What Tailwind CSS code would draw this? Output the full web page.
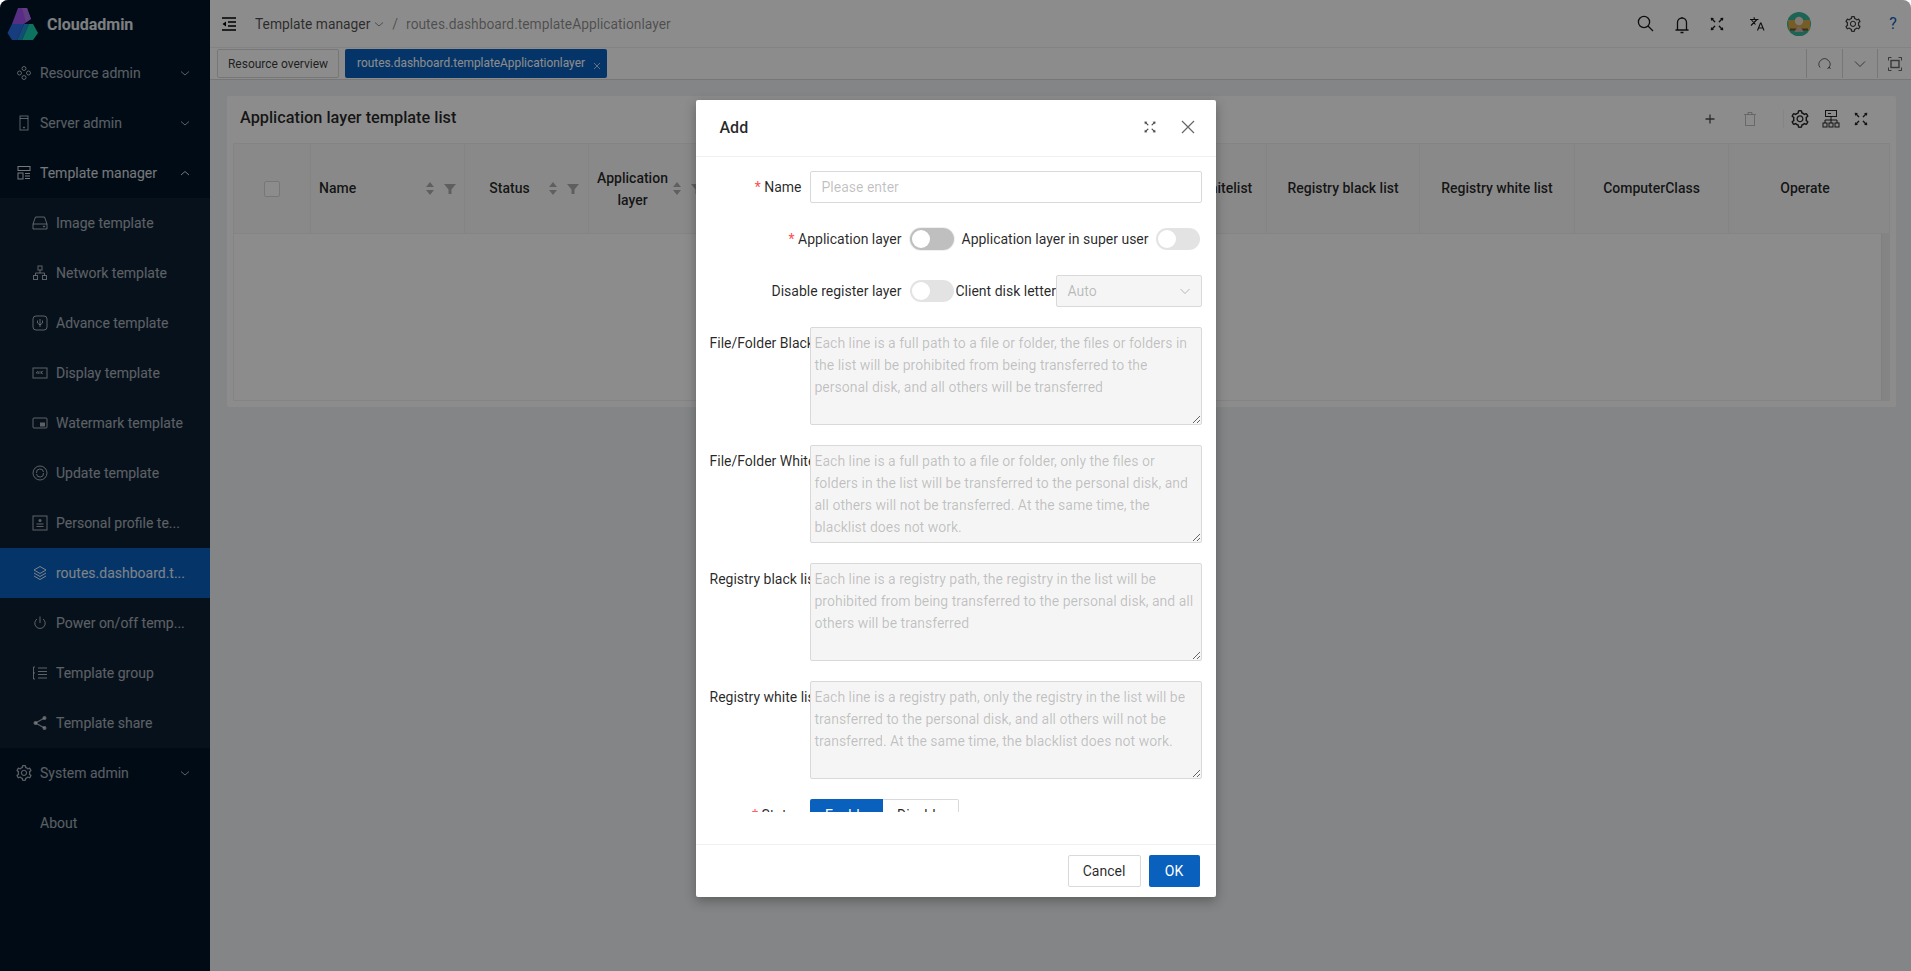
<!DOCTYPE html>
<html lang="en">
<head>
  <meta charset="UTF-8" />
  <title>Cloudadmin</title>
  <script src="https://cdn.jsdelivr.net/npm/@tailwindcss/browser@4"></script>
</head>
<body class="bg-white font-['Roboto',sans-serif] text-[14px] text-[#262626] overflow-hidden">
<div class="relative w-[1911px] h-[971px] flex overflow-hidden rounded-t-lg bg-[#f0f2f5]">

  <!-- Sidebar -->
  <aside class="w-[210px] shrink-0 bg-[#001529] text-white/65 flex flex-col">
    <div class="h-12 flex items-center gap-[7px]">
      <svg class="shrink-0" width="40" height="48" viewBox="0 0 40 48">
        <path d="M18 8 L27 8 L31 19 L24 24 L12 24 Z" fill="#9f55f0"/>
        <path d="M22 8 L27 8 L31 19 L26 22 Z" fill="#b170ee"/>
        <path d="M12 24 L24 24 L17 40 L12 40 L7.5 33 Z" fill="#2d6fe8"/>
        <path d="M24 24 L29 24 L22 40 L17 40 Z" fill="#228cd8"/>
        <path d="M29 24 L33 24 L38 33 L33 40 L22 40 Z" fill="#1bd0b0"/>
      </svg>
      <span class="text-[16px] font-bold text-white/90 mt-0.5">Cloudadmin</span>
    </div>
    <nav>
      <a class="h-[50px] flex items-center pl-[16px] pr-[20px]">
        <svg class="w-4 h-4 mr-2" viewBox="0 0 16 16" fill="none" stroke="currentColor"><circle cx="8" cy="3.5" r="2"/><circle cx="3.5" cy="8" r="2"/><circle cx="12.5" cy="8" r="2"/><circle cx="8" cy="12.5" r="2"/></svg>
        <span class="flex-1">Resource admin</span>
        <svg class="w-[10px] h-[10px]" viewBox="0 0 10 10" fill="none" stroke="currentColor"><path d="M1 3.5 L5 7 L9 3.5"/></svg>
      </a>
      <a class="h-[50px] flex items-center pl-[16px] pr-[20px]">
        <svg class="w-4 h-4 mr-2" viewBox="0 0 16 16" fill="none" stroke="currentColor"><rect x="4" y="1" width="8" height="14"/><path d="M4 3.5 H12"/><circle cx="8" cy="12.5" r=".6"/></svg>
        <span class="flex-1">Server admin</span>
        <svg class="w-[10px] h-[10px]" viewBox="0 0 10 10" fill="none" stroke="currentColor"><path d="M1 3.5 L5 7 L9 3.5"/></svg>
      </a>
      <a class="h-[50px] flex items-center pl-[16px] pr-[20px] text-white/85">
        <svg class="w-4 h-4 mr-2" viewBox="0 0 16 16" fill="none" stroke="currentColor"><rect x="2" y="1.5" width="12" height="4"/><rect x="2" y="8" width="5" height="6"/><path d="M9 8.5 H14 M9 11 H14 M9 13.5 H14"/></svg>
        <span class="flex-1">Template manager</span>
        <svg class="w-[10px] h-[10px]" viewBox="0 0 10 10" fill="none" stroke="currentColor"><path d="M1 7 L5 3.5 L9 7"/></svg>
      </a>
    </nav>
    <ul class="bg-[#0c1f33]">
      <li class="h-[50px] flex items-center pl-[32px]">
        <svg class="w-4 h-4 mr-2 shrink-0" viewBox="0 0 16 16" fill="none" stroke="currentColor"><path d="M1 14 V9 L3.5 2 H12.5 L15 9 V14 Z M1 9 H15"/><circle cx="12" cy="11.5" r=".6"/></svg>
        <span class="whitespace-nowrap">Image template</span>
      </li>
      <li class="h-[50px] flex items-center pl-[32px]">
        <svg class="w-4 h-4 mr-2 shrink-0" viewBox="0 0 16 16" fill="none" stroke="currentColor"><rect x="6" y="1" width="4" height="4"/><rect x="1.5" y="10.5" width="4" height="4"/><rect x="10.5" y="10.5" width="4" height="4"/><path d="M8 5 V8 M3.5 10.5 V8 H12.5 V10.5"/></svg>
        <span class="whitespace-nowrap">Network template</span>
      </li>
      <li class="h-[50px] flex items-center pl-[32px]">
        <svg class="w-4 h-4 mr-2 shrink-0" viewBox="0 0 16 16" fill="none" stroke="currentColor"><rect x="1" y="1" width="14" height="14" rx="3"/><path d="M8 4 V12 M5.5 5.5 V8 L8 10 M10.5 5.5 V8 L8 10"/></svg>
        <span class="whitespace-nowrap">Advance template</span>
      </li>
      <li class="h-[50px] flex items-center pl-[32px]">
        <svg class="w-4 h-4 mr-2 shrink-0" viewBox="0 0 16 16" fill="none" stroke="currentColor"><rect x="1" y="3" width="14" height="10"/><path d="M6 6 L4 8 H7 M7 6 V9 M9 6 V9 M11 6 L9 7.5 L11 9" stroke-width=".8"/></svg>
        <span class="whitespace-nowrap">Display template</span>
      </li>
      <li class="h-[50px] flex items-center pl-[32px]">
        <svg class="w-4 h-4 mr-2 shrink-0" viewBox="0 0 16 16" fill="none" stroke="currentColor"><rect x="1" y="3" width="14" height="10" rx="1"/><rect x="8" y="7.5" width="5" height="4" fill="currentColor" stroke="none"/></svg>
        <span class="whitespace-nowrap">Watermark template</span>
      </li>
      <li class="h-[50px] flex items-center pl-[32px]">
        <svg class="w-4 h-4 mr-2 shrink-0" viewBox="0 0 16 16" fill="none" stroke="currentColor"><circle cx="8" cy="8" r="7"/><path d="M4.5 8 A3.5 3.5 0 0 1 11.5 7 M11.5 8 A3.5 3.5 0 0 1 4.5 9"/></svg>
        <span class="whitespace-nowrap">Update template</span>
      </li>
      <li class="h-[50px] flex items-center pl-[32px]">
        <svg class="w-4 h-4 mr-2 shrink-0" viewBox="0 0 16 16" fill="none" stroke="currentColor"><rect x="1" y="1" width="14" height="14"/><circle cx="8" cy="5.5" r="1.5" fill="currentColor" stroke="none"/><path d="M4.5 9 H11.5 M4.5 11.5 H11.5"/></svg>
        <span class="whitespace-nowrap">Personal profile te...</span>
      </li>
      <li class="h-[50px] flex items-center pl-[32px] bg-[#0960bd] text-white/90">
        <svg class="w-4 h-4 mr-2 shrink-0" viewBox="0 0 16 16" fill="none" stroke="currentColor"><path d="M8 1.5 L14 5 L8 8.5 L2 5 Z M2 8 L8 11.5 L14 8 M2 11 L8 14.5 L14 11"/></svg>
        <span class="whitespace-nowrap">routes.dashboard.t...</span>
      </li>
      <li class="h-[50px] flex items-center pl-[32px]">
        <svg class="w-4 h-4 mr-2 shrink-0" viewBox="0 0 16 16" fill="none" stroke="currentColor"><path d="M5 4 A5.2 5.2 0 1 0 11 4 M8 1.5 V8"/></svg>
        <span class="whitespace-nowrap">Power on/off temp...</span>
      </li>
      <li class="h-[50px] flex items-center pl-[32px]">
        <svg class="w-4 h-4 mr-2 shrink-0" viewBox="0 0 16 16" fill="none" stroke="currentColor"><path d="M6 3 H15 M6 6.5 H15 M6 9.5 H15 M6 13 H15 M3 2 H1.5 V14 H3 M1.5 8 H3"/></svg>
        <span class="whitespace-nowrap">Template group</span>
      </li>
      <li class="h-[50px] flex items-center pl-[32px]">
        <svg class="w-4 h-4 mr-2 shrink-0" viewBox="0 0 16 16" fill="none" stroke="currentColor"><path d="M12.5 3 L3.5 8 L12.5 13" stroke-width="1.2"/><circle cx="12.5" cy="3" r="2" fill="currentColor" stroke="none"/><circle cx="3.5" cy="8" r="2" fill="currentColor" stroke="none"/><circle cx="12.5" cy="13" r="2" fill="currentColor" stroke="none"/></svg>
        <span class="whitespace-nowrap">Template share</span>
      </li>
    </ul>
    <a class="h-[50px] flex items-center pl-[16px] pr-[20px]">
      <svg class="w-4 h-4 mr-2" viewBox="64 64 896 896" fill="currentColor"><path d="M924.8 625.7l-65.5-56c3.1-19 4.7-38.4 4.7-57.8s-1.6-38.8-4.7-57.8l65.5-56a32.03 32.03 0 009.3-35.2l-.9-2.6a443.74 443.74 0 00-79.7-137.9l-1.8-2.1a32.12 32.12 0 00-35.1-9.5l-81.3 28.9c-30-24.6-63.5-44-99.7-57.6l-15.7-85a32.05 32.05 0 00-25.8-25.7l-2.7-.5c-52.1-9.4-106.9-9.4-159 0l-2.7.5a32.05 32.05 0 00-25.8 25.7l-15.8 85.4a351.86 351.86 0 00-99 57.4l-81.9-29.1a32 32 0 00-35.1 9.5l-1.8 2.1a446.02 446.02 0 00-79.7 137.9l-.9 2.6c-4.5 12.5-.8 26.5 9.3 35.2l66.3 56.6c-3.1 18.8-4.6 38-4.6 57.1 0 19.2 1.5 38.4 4.6 57.1L99 625.5a32.03 32.03 0 00-9.3 35.2l.9 2.6c18.1 50.4 44.9 96.9 79.7 137.9l1.8 2.1a32.12 32.12 0 0035.1 9.5l81.9-29.1c29.8 24.5 63.1 43.9 99 57.4l15.8 85.4a32.05 32.05 0 0025.8 25.7l2.7.5a449.4 449.4 0 00159 0l2.7-.5a32.05 32.05 0 0025.8-25.7l15.7-85a350 350 0 0099.7-57.6l81.3 28.9a32 32 0 0035.1-9.5l1.8-2.1c34.8-41.1 61.6-87.5 79.7-137.9l.9-2.6c4.5-12.3.8-26.3-9.3-35zM788.3 465.9c2.5 15.1 3.8 30.6 3.8 46.1s-1.3 31-3.8 46.1l-6.6 40.1 74.7 63.9a370.03 370.03 0 01-42.6 73.6L721 702.8l-31.4 25.8c-23.9 19.6-50.5 35-79.3 45.8l-38.1 14.3-17.9 97a377.5 377.5 0 01-85 0l-17.9-97.2-37.8-14.5c-28.5-10.8-55-26.2-78.7-45.7l-31.4-25.9-93.4 33.2c-17-22.9-31.2-47.6-42.6-73.6l75.5-64.5-6.5-40c-2.4-14.9-3.7-30.3-3.7-45.5 0-15.3 1.2-30.6 3.7-45.5l6.5-40-75.5-64.5c11.3-26.1 25.6-50.7 42.6-73.6l93.4 33.2 31.4-25.9c23.7-19.5 50.2-34.9 78.7-45.7l37.9-14.3 17.9-97.2c28.1-3.2 56.8-3.2 85 0l17.9 97 38.1 14.3c28.7 10.8 55.4 26.2 79.3 45.8l31.4 25.8 92.8-32.9c17 22.9 31.2 47.6 42.6 73.6L781.8 426l6.5 39.9zM512 326c-97.2 0-176 78.8-176 176s78.8 176 176 176 176-78.8 176-176-78.8-176-176-176zm79.2 255.2A111.6 111.6 0 01512 614c-29.9 0-58-11.7-79.2-32.8A111.6 111.6 0 01400 502c0-29.9 11.7-58 32.8-79.2C454 401.6 482.1 390 512 390c29.9 0 58 11.6 79.2 32.8A111.6 111.6 0 01624 502c0 29.9-11.7 58-32.8 79.2z"/></svg>
      <span class="flex-1">System admin</span>
      <svg class="w-[10px] h-[10px]" viewBox="0 0 10 10" fill="none" stroke="currentColor"><path d="M1 3.5 L5 7 L9 3.5"/></svg>
    </a>
    <a class="h-[50px] flex items-center pl-[40px]">About</a>
  </aside>

  <!-- Main -->
  <div class="flex-1 min-w-0 flex flex-col">
    <header class="h-12 bg-white border-b border-[#eee] flex items-center pr-3">
      <svg class="ml-3 w-[14px] h-[14px] text-black" viewBox="0 0 14 14" fill="none" stroke="currentColor" stroke-width="1.3"><path d="M0 1 H14 M6 5 H14 M6 9 H14 M0 13 H14"/><path d="M4 4.5 L.5 7 L4 9.5 Z" fill="currentColor" stroke="none"/></svg>
      <span class="ml-[19px] text-black/70 text-[13.8px] mt-px">Template manager</span>
      <svg class="w-[10px] h-[10px] ml-[4px] text-black/45" viewBox="0 0 10 10" fill="none" stroke="currentColor"><path d="M1 3.5 L5 7 L9 3.5"/></svg>
      <span class="ml-[8px] text-black/45 mt-px">/</span>
      <span class="ml-[8px] text-black/45 text-[13.8px] mt-px">routes.dashboard.templateApplicationlayer</span>
      <div class="ml-auto flex items-center text-black/90">
        <div class="w-9 flex justify-center"><svg class="w-[17px] h-[17px]" viewBox="0 0 17 17" fill="none" stroke="currentColor" stroke-width="1.3"><circle cx="7" cy="7" r="5.6"/><path d="M11 11 L16 16"/></svg></div>
        <div class="w-9 flex justify-center"><svg class="w-[14px] h-[18px] mt-0.5 ml-0.5" viewBox="0 0 14 18" fill="none" stroke="currentColor" stroke-width="1.3"><path d="M.5 14 H13.5 M2.5 14 V6.5 A4.5 4.5 0 0 1 11.5 6.5 V14 M7 1 V2 M5.5 16.5 H8.5"/></svg></div>
        <div class="w-9 flex justify-center"><svg class="w-4 h-4" viewBox="64 64 896 896" fill="currentColor"><path d="M290 236.4l43.9-43.9a8.01 8.01 0 00-4.7-13.6L169 160c-5.1-.6-9.5 3.7-8.9 8.9L179 329.1c.8 6.6 8.9 9.4 13.6 4.7l43.7-43.7L370 423.7c3.1 3.1 8.2 3.1 11.3 0l42.4-42.3c3.1-3.1 3.1-8.2 0-11.3L290 236.4zm352.7 187.3c3.1 3.1 8.2 3.1 11.3 0l133.7-133.6 43.7 43.7a8.01 8.01 0 0013.6-4.7L863.9 169c.6-5.1-3.7-9.5-8.9-8.9L694.8 179c-6.6.8-9.4 8.9-4.7 13.6l43.9 43.9L600.3 370a8.03 8.03 0 000 11.3l42.4 42.4zM845 694.9c-.8-6.6-8.9-9.4-13.6-4.7l-43.7 43.7L654 600.3a8.03 8.03 0 00-11.3 0l-42.4 42.3a8.03 8.03 0 000 11.3L734 787.6l-43.9 43.9a8.01 8.01 0 004.7 13.6L855 864c5.1.6 9.5-3.7 8.9-8.9L845 694.9zm-463.7-94.6a8.03 8.03 0 00-11.3 0L236.3 733.9l-43.7-43.7a8.01 8.01 0 00-13.6 4.7L160.1 855c-.6 5.1 3.7 9.5 8.9 8.9L329.2 845c6.6-.8 9.4-8.9 4.7-13.6L290 787.6 423.7 654c3.1-3.1 3.1-8.2 0-11.3l-42.4-42.4z"/></svg></div>
        <div class="w-[44px] flex justify-center"><svg class="w-[15px] h-[14px]" viewBox="0 0 15 14" fill="none" stroke="currentColor" stroke-width="1.1"><path d="M0 2.5 H8.5 M4.2 .3 V2.5 M1 8.5 L7 2.5 M1.5 3 L5.5 7.5"/><path d="M7.5 13.5 L10.5 6 H11 L14 13.5 M8.7 11 H12.8"/></svg></div>
        <div class="w-[40px] flex justify-center">
          <svg class="w-6 h-6" viewBox="0 0 24 24"><circle cx="12" cy="12" r="12" fill="#36b79c"/><path d="M1 8 H23 V18 H2 Z" fill="#d6a94a"/><path d="M3 16.5 H21 V18.5 H3 Z" fill="#7b5524"/><circle cx="12" cy="9" r="4.2" fill="#eedcd4"/><path d="M7.5 20 Q12 10 16.5 20 Z" fill="#c9b5ac"/><path d="M3 20 A12 12 0 0 0 21 20 Z" fill="#36b79c"/></svg>
        </div>
        <div class="w-[68px] flex justify-center"><svg class="w-4 h-4 text-black/75" viewBox="64 64 896 896" fill="currentColor"><path d="M924.8 625.7l-65.5-56c3.1-19 4.7-38.4 4.7-57.8s-1.6-38.8-4.7-57.8l65.5-56a32.03 32.03 0 009.3-35.2l-.9-2.6a443.74 443.74 0 00-79.7-137.9l-1.8-2.1a32.12 32.12 0 00-35.1-9.5l-81.3 28.9c-30-24.6-63.5-44-99.7-57.6l-15.7-85a32.05 32.05 0 00-25.8-25.7l-2.7-.5c-52.1-9.4-106.9-9.4-159 0l-2.7.5a32.05 32.05 0 00-25.8 25.7l-15.8 85.4a351.86 351.86 0 00-99 57.4l-81.9-29.1a32 32 0 00-35.1 9.5l-1.8 2.1a446.02 446.02 0 00-79.7 137.9l-.9 2.6c-4.5 12.5-.8 26.5 9.3 35.2l66.3 56.6c-3.1 18.8-4.6 38-4.6 57.1 0 19.2 1.5 38.4 4.6 57.1L99 625.5a32.03 32.03 0 00-9.3 35.2l.9 2.6c18.1 50.4 44.9 96.9 79.7 137.9l1.8 2.1a32.12 32.12 0 0035.1 9.5l81.9-29.1c29.8 24.5 63.1 43.9 99 57.4l15.8 85.4a32.05 32.05 0 0025.8 25.7l2.7.5a449.4 449.4 0 00159 0l2.7-.5a32.05 32.05 0 0025.8-25.7l15.7-85a350 350 0 0099.7-57.6l81.3 28.9a32 32 0 0035.1-9.5l1.8-2.1c34.8-41.1 61.6-87.5 79.7-137.9l.9-2.6c4.5-12.3.8-26.3-9.3-35zM788.3 465.9c2.5 15.1 3.8 30.6 3.8 46.1s-1.3 31-3.8 46.1l-6.6 40.1 74.7 63.9a370.03 370.03 0 01-42.6 73.6L721 702.8l-31.4 25.8c-23.9 19.6-50.5 35-79.3 45.8l-38.1 14.3-17.9 97a377.5 377.5 0 01-85 0l-17.9-97.2-37.8-14.5c-28.5-10.8-55-26.2-78.7-45.7l-31.4-25.9-93.4 33.2c-17-22.9-31.2-47.6-42.6-73.6l75.5-64.5-6.5-40c-2.4-14.9-3.7-30.3-3.7-45.5 0-15.3 1.2-30.6 3.7-45.5l6.5-40-75.5-64.5c11.3-26.1 25.6-50.7 42.6-73.6l93.4 33.2 31.4-25.9c23.7-19.5 50.2-34.9 78.7-45.7l37.9-14.3 17.9-97.2c28.1-3.2 56.8-3.2 85 0l17.9 97 38.1 14.3c28.7 10.8 55.4 26.2 79.3 45.8l31.4 25.8 92.8-32.9c17 22.9 31.2 47.6 42.6 73.6L781.8 426l6.5 39.9zM512 326c-97.2 0-176 78.8-176 176s78.8 176 176 176 176-78.8 176-176-78.8-176-176-176zm79.2 255.2A111.6 111.6 0 01512 614c-29.9 0-58-11.7-79.2-32.8A111.6 111.6 0 01400 502c0-29.9 11.7-58 32.8-79.2C454 401.6 482.1 390 512 390c29.9 0 58 11.6 79.2 32.8A111.6 111.6 0 01624 502c0 29.9-11.7 58-32.8 79.2z"/></svg></div>
        <span class="w-3 text-center text-[16px] text-[#0960bd]">?</span>
      </div>
    </header>
    <div class="h-8 bg-white border-b border-[#d9d9d9] flex items-end pl-[7px]">
      <div class="h-[29px] mb-px w-[122px] border border-[#d9d9d9] rounded-[2px] flex items-center justify-center text-[12px] text-black/80">Resource overview</div>
      <div class="h-[29px] mb-px w-[262px] ml-[6px] bg-[#0960bd] rounded-[2px] flex items-center pl-3 text-[11.9px] text-white whitespace-nowrap">
        routes.dashboard.templateApplicationlayer
        <svg class="w-2 h-2 absolute left-[593px] top-[62px] text-white/70" viewBox="0 0 8 8" stroke="currentColor"><path d="M1 1 L7 7 M7 1 L1 7"/></svg>
      </div>
      <div class="ml-auto flex text-black/60">
        <div class="w-9 h-[29px] mb-px border-l border-[#d9d9d9] flex items-center justify-center"><svg class="w-[13px] h-[13px]" viewBox="0 0 13 13" fill="none" stroke="currentColor"><path d="M2 10.5 A5.5 5.5 0 1 1 11 10.5 M9.5 12 L11 10 L12.5 12"/></svg></div>
        <div class="w-[35px] h-[29px] mb-px border-l border-[#d9d9d9] flex items-center justify-center"><svg class="w-3 h-3" viewBox="0 0 12 12" fill="none" stroke="currentColor"><path d="M1 3.5 L6 8.5 L11 3.5"/></svg></div>
        <div class="w-[34px] h-[29px] mb-px border-l border-[#d9d9d9] flex items-center justify-center"><svg class="w-[14px] h-[14px]" viewBox="0 0 14 14" fill="none" stroke="currentColor"><path d="M.5 3.5 V.5 H3.5 M10.5 .5 H13.5 V3.5 M13.5 10.5 V13.5 H10.5 M3.5 13.5 H.5 V10.5"/><rect x="3" y="3.5" width="8" height="7" stroke-width="1.4"/></svg></div>
      </div>
    </div>
    <main class="flex-1 pt-4 pl-[17px] pr-[15px]">
      <section class="h-[311px] bg-white px-[6px] rounded-[2px]">
        <div class="h-[47px] flex items-center pb-[2px]">
          <h2 class="pl-[7px] text-[16.3px] font-medium text-black/85">Application layer template list</h2>
          <div class="ml-auto flex items-center pr-[21px] text-black/85">
            <svg class="w-3 h-3 text-black/70" viewBox="0 0 12 12" stroke="currentColor" stroke-width="1.3"><path d="M6 1.5 V10.5 M1.5 6 H10.5"/></svg>
            <svg class="w-[14px] h-4 ml-[27px] text-black/25" viewBox="0 0 14 16" fill="none" stroke="currentColor"><path d="M2.5 4 V14.5 H11.5 V4 M1 3.5 H13 M5 3.5 V1.5 H9 V3.5"/></svg>
            <span class="w-px h-[18px] ml-[26px] bg-black/5"></span>
            <svg class="w-[18px] h-[18px] ml-[7px]" viewBox="64 64 896 896" fill="currentColor"><path d="M924.8 625.7l-65.5-56c3.1-19 4.7-38.4 4.7-57.8s-1.6-38.8-4.7-57.8l65.5-56a32.03 32.03 0 009.3-35.2l-.9-2.6a443.74 443.74 0 00-79.7-137.9l-1.8-2.1a32.12 32.12 0 00-35.1-9.5l-81.3 28.9c-30-24.6-63.5-44-99.7-57.6l-15.7-85a32.05 32.05 0 00-25.8-25.7l-2.7-.5c-52.1-9.4-106.9-9.4-159 0l-2.7.5a32.05 32.05 0 00-25.8 25.7l-15.8 85.4a351.86 351.86 0 00-99 57.4l-81.9-29.1a32 32 0 00-35.1 9.5l-1.8 2.1a446.02 446.02 0 00-79.7 137.9l-.9 2.6c-4.5 12.5-.8 26.5 9.3 35.2l66.3 56.6c-3.1 18.8-4.6 38-4.6 57.1 0 19.2 1.5 38.4 4.6 57.1L99 625.5a32.03 32.03 0 00-9.3 35.2l.9 2.6c18.1 50.4 44.9 96.9 79.7 137.9l1.8 2.1a32.12 32.12 0 0035.1 9.5l81.9-29.1c29.8 24.5 63.1 43.9 99 57.4l15.8 85.4a32.05 32.05 0 0025.8 25.7l2.7.5a449.4 449.4 0 00159 0l2.7-.5a32.05 32.05 0 0025.8-25.7l15.7-85a350 350 0 0099.7-57.6l81.3 28.9a32 32 0 0035.1-9.5l1.8-2.1c34.8-41.1 61.6-87.5 79.7-137.9l.9-2.6c4.5-12.3.8-26.3-9.3-35zM788.3 465.9c2.5 15.1 3.8 30.6 3.8 46.1s-1.3 31-3.8 46.1l-6.6 40.1 74.7 63.9a370.03 370.03 0 01-42.6 73.6L721 702.8l-31.4 25.8c-23.9 19.6-50.5 35-79.3 45.8l-38.1 14.3-17.9 97a377.5 377.5 0 01-85 0l-17.9-97.2-37.8-14.5c-28.5-10.8-55-26.2-78.7-45.7l-31.4-25.9-93.4 33.2c-17-22.9-31.2-47.6-42.6-73.6l75.5-64.5-6.5-40c-2.4-14.9-3.7-30.3-3.7-45.5 0-15.3 1.2-30.6 3.7-45.5l6.5-40-75.5-64.5c11.3-26.1 25.6-50.7 42.6-73.6l93.4 33.2 31.4-25.9c23.7-19.5 50.2-34.9 78.7-45.7l37.9-14.3 17.9-97.2c28.1-3.2 56.8-3.2 85 0l17.9 97 38.1 14.3c28.7 10.8 55.4 26.2 79.3 45.8l31.4 25.8 92.8-32.9c17 22.9 31.2 47.6 42.6 73.6L781.8 426l6.5 39.9zM512 326c-97.2 0-176 78.8-176 176s78.8 176 176 176 176-78.8 176-176-78.8-176-176-176zm79.2 255.2A111.6 111.6 0 01512 614c-29.9 0-58-11.7-79.2-32.8A111.6 111.6 0 01400 502c0-29.9 11.7-58 32.8-79.2C454 401.6 482.1 390 512 390c29.9 0 58 11.6 79.2 32.8A111.6 111.6 0 01624 502c0 29.9-11.7 58-32.8 79.2z"/></svg>
            <svg class="w-[18px] h-[18px] ml-[13px]" viewBox="0 0 18 18" fill="none" stroke="currentColor"><rect x="3.5" y=".5" width="11" height="6"/><path d="M6 3.5 H9 M9 6.5 V10 M3 13 V10 H15 V13 M9 10 V13"/><rect x="1" y="13" width="4" height="4"/><rect x="7" y="13" width="4" height="4"/><rect x="13" y="13" width="4" height="4"/></svg>
            <svg class="w-4 h-4 ml-[13px]" viewBox="64 64 896 896" fill="currentColor"><path d="M290 236.4l43.9-43.9a8.01 8.01 0 00-4.7-13.6L169 160c-5.1-.6-9.5 3.7-8.9 8.9L179 329.1c.8 6.6 8.9 9.4 13.6 4.7l43.7-43.7L370 423.7c3.1 3.1 8.2 3.1 11.3 0l42.4-42.3c3.1-3.1 3.1-8.2 0-11.3L290 236.4zm352.7 187.3c3.1 3.1 8.2 3.1 11.3 0l133.7-133.6 43.7 43.7a8.01 8.01 0 0013.6-4.7L863.9 169c.6-5.1-3.7-9.5-8.9-8.9L694.8 179c-6.6.8-9.4 8.9-4.7 13.6l43.9 43.9L600.3 370a8.03 8.03 0 000 11.3l42.4 42.4zM845 694.9c-.8-6.6-8.9-9.4-13.6-4.7l-43.7 43.7L654 600.3a8.03 8.03 0 00-11.3 0l-42.4 42.3a8.03 8.03 0 000 11.3L734 787.6l-43.9 43.9a8.01 8.01 0 004.7 13.6L855 864c5.1.6 9.5-3.7 8.9-8.9L845 694.9zm-463.7-94.6a8.03 8.03 0 00-11.3 0L236.3 733.9l-43.7-43.7a8.01 8.01 0 00-13.6 4.7L160.1 855c-.6 5.1 3.7 9.5 8.9 8.9L329.2 845c6.6-.8 9.4-8.9 4.7-13.6L290 787.6 423.7 654c3.1-3.1 3.1-8.2 0-11.3l-42.4-42.4z"/></svg>
          </div>
        </div>
        <div class="flex h-[91px] border border-[#f0f0f0] bg-[#fafafa] font-medium text-black/85 text-center">
          <div class="w-[77px] border-r border-[#f0f0f0] flex items-center justify-center"><span class="w-4 h-4 border border-[#d9d9d9] bg-white rounded-[2px]"></span></div>
          <div class="w-[154px] border-r border-[#f0f0f0] flex items-center pl-2 pr-[8px]">
            <span class="flex-1 text-left">Name</span>
            <svg class="w-[8px] h-[13px] text-black/30" viewBox="0 0 8 13" fill="currentColor"><path d="M4 0 L8 5 H0 Z M0 8 H8 L4 13 Z"/></svg>
            <svg class="w-[12px] h-[12px] ml-[10px] text-black/30" viewBox="0 0 12 12" fill="currentColor"><path d="M0 1 H12 L7.5 6.5 V11 H4.5 V6.5 Z"/></svg>
          </div>
          <div class="w-[124px] border-r border-[#f0f0f0] flex items-center pr-[9px]">
            <span class="flex-1 text-center pl-[5px]">Status</span>
            <svg class="w-[8px] h-[13px] text-black/30" viewBox="0 0 8 13" fill="currentColor"><path d="M4 0 L8 5 H0 Z M0 8 H8 L4 13 Z"/></svg>
            <svg class="w-[12px] h-[12px] ml-[10px] text-black/30" viewBox="0 0 12 12" fill="currentColor"><path d="M0 1 H12 L7.5 6.5 V11 H4.5 V6.5 Z"/></svg>
          </div>
          <div class="w-[123px] border-r border-[#f0f0f0] flex items-center pr-[8px] leading-[22px]">
            <span class="flex-1 text-center pl-[3px]">Application<br>layer</span>
            <svg class="w-[8px] h-[13px] text-black/30" viewBox="0 0 8 13" fill="currentColor"><path d="M4 0 L8 5 H0 Z M0 8 H8 L4 13 Z"/></svg>
            <svg class="w-[12px] h-[12px] ml-[10px] text-black/30" viewBox="0 0 12 12" fill="currentColor"><path d="M0 1 H12 L7.5 6.5 V11 H4.5 V6.5 Z"/></svg>
          </div>
          <div class="w-[134px] border-r border-[#f0f0f0]"></div>
          <div class="w-[134px] border-r border-[#f0f0f0]"></div>
          <div class="w-[133px] border-r border-[#f0f0f0]"></div>
          <div class="w-[154px] border-r border-[#f0f0f0] flex items-center justify-center whitespace-nowrap">File/Folder Whitelist</div>
          <div class="w-[153px] border-r border-[#f0f0f0] flex items-center justify-center">Registry black list</div>
          <div class="w-[155px] border-r border-[#f0f0f0] flex items-center justify-center">Registry white list</div>
          <div class="w-[154px] border-r border-[#f0f0f0] flex items-center justify-center">ComputerClass</div>
          <div class="flex-1 flex items-center justify-center pr-2">Operate</div>
        </div>
        <div class="h-[167px] border-x border-b border-[#f0f0f0] flex justify-end">
          <div class="w-2 bg-[#f1f1f1] border-l border-[#e8e8e8]"></div>
        </div>
      </section>
    </main>
  </div>

  <!-- Modal -->
  <div class="absolute inset-0 bg-black/45 flex justify-center pt-[100px]">
    <div class="w-[520px] h-[797px] bg-white rounded-[2px] shadow-[0_4px_12px_rgba(0,0,0,0.3)] flex flex-col">
      <div class="h-[57px] shrink-0 border-b border-[#f0f0f0] flex items-center pl-[24px] pr-[21px] text-black/85">
        <span class="text-[16px] font-medium flex-1">Add</span>
        <svg class="w-[14px] h-[14px] mb-[2px] text-black/70" viewBox="64 64 896 896" fill="currentColor"><path d="M290 236.4l43.9-43.9a8.01 8.01 0 00-4.7-13.6L169 160c-5.1-.6-9.5 3.7-8.9 8.9L179 329.1c.8 6.6 8.9 9.4 13.6 4.7l43.7-43.7L370 423.7c3.1 3.1 8.2 3.1 11.3 0l42.4-42.3c3.1-3.1 3.1-8.2 0-11.3L290 236.4zm352.7 187.3c3.1 3.1 8.2 3.1 11.3 0l133.7-133.6 43.7 43.7a8.01 8.01 0 0013.6-4.7L863.9 169c.6-5.1-3.7-9.5-8.9-8.9L694.8 179c-6.6.8-9.4 8.9-4.7 13.6l43.9 43.9L600.3 370a8.03 8.03 0 000 11.3l42.4 42.4zM845 694.9c-.8-6.6-8.9-9.4-13.6-4.7l-43.7 43.7L654 600.3a8.03 8.03 0 00-11.3 0l-42.4 42.3a8.03 8.03 0 000 11.3L734 787.6l-43.9 43.9a8.01 8.01 0 004.7 13.6L855 864c5.1.6 9.5-3.7 8.9-8.9L845 694.9zm-463.7-94.6a8.03 8.03 0 00-11.3 0L236.3 733.9l-43.7-43.7a8.01 8.01 0 00-13.6 4.7L160.1 855c-.6 5.1 3.7 9.5 8.9 8.9L329.2 845c6.6-.8 9.4-8.9 4.7-13.6L290 787.6 423.7 654c3.1-3.1 3.1-8.2 0-11.3l-42.4-42.4z"/></svg>
        <svg class="w-[14px] h-[14px] mb-[2px] ml-[24px] text-black/60" viewBox="0 0 14 14" stroke="currentColor" stroke-width="1.2"><path d="M1 1 L13 13 M13 1 L1 13"/></svg>
      </div>
      <div class="flex-1 pt-[14px] px-[14px] min-h-0">
        <div class="h-[641px] overflow-hidden flex flex-col gap-5 text-black/85">
          <div class="flex h-8 shrink-0">
            <label class="w-[100px] pr-2 text-right leading-8 whitespace-nowrap"><span class="text-[#ff4d4f]">* </span>Name</label>
            <input class="flex-1 h-8 px-[11px] border border-[#d9d9d9] rounded-[2px] placeholder:text-black/25" placeholder="Please enter" />
          </div>
          <div class="flex h-8 shrink-0 items-center">
            <label class="w-[200px] pr-2 text-right whitespace-nowrap"><span class="text-[#ff4d4f]">* </span>Application layer</label>
            <span class="w-11 h-[22px] rounded-full bg-[#bfbfbf] p-0.5 shadow-[0_0_0_1px_rgba(0,0,0,0.06)]"><span class="block w-[18px] h-[18px] rounded-full bg-white"></span></span>
            <label class="ml-2 w-[194px] pr-2 whitespace-nowrap">Application layer in super user</label>
            <span class="w-11 h-[22px] rounded-full bg-[#e3e3e3] p-0.5"><span class="block w-[18px] h-[18px] rounded-full bg-white"></span></span>
          </div>
          <div class="flex h-8 shrink-0 items-center">
            <label class="w-[200px] pr-2 text-right whitespace-nowrap">Disable register layer</label>
            <span class="w-11 h-[22px] rounded-full bg-[#e3e3e3] p-0.5"><span class="block w-[18px] h-[18px] rounded-full bg-white"></span></span>
            <label class="ml-[2px] w-[100px] overflow-hidden whitespace-nowrap">Client disk letter</label>
            <div class="flex-1 h-8 px-[11px] border border-[#d9d9d9] rounded-[2px] bg-[#f5f5f5] flex items-center text-black/25">
              <span class="flex-1">Auto</span>
              <svg class="w-[10px] h-[10px]" viewBox="0 0 10 10" fill="none" stroke="currentColor"><path d="M.5 3 L5 7.5 L9.5 3"/></svg>
            </div>
          </div>
          <div class="flex h-[98px] shrink-0">
            <label class="w-[100px] pr-2 text-right overflow-hidden whitespace-nowrap leading-[32px]">File/Folder Blacklist</label>
            <textarea disabled class="flex-1 h-[98px] px-1 py-1 leading-[22px] border border-[#d9d9d9] rounded-[2px] bg-[#f5f5f5] resize-y placeholder:text-black/[0.22]" placeholder="Each line is a full path to a file or folder, the files or folders in&#10;the list will be prohibited from being transferred to the&#10;personal disk, and all others will be transferred"></textarea>
          </div>
          <div class="flex h-[98px] shrink-0">
            <label class="w-[100px] pr-2 text-right overflow-hidden whitespace-nowrap leading-[32px]">File/Folder Whitelist</label>
            <textarea disabled class="flex-1 h-[98px] px-1 py-1 leading-[22px] border border-[#d9d9d9] rounded-[2px] bg-[#f5f5f5] resize-y placeholder:text-black/[0.22]" placeholder="Each line is a full path to a file or folder, only the files or&#10;folders in the list will be transferred to the personal disk, and&#10;all others will not be transferred. At the same time, the&#10;blacklist does not work."></textarea>
          </div>
          <div class="flex h-[98px] shrink-0">
            <label class="w-[100px] pr-2 text-right overflow-hidden whitespace-nowrap leading-[32px]">Registry black list</label>
            <textarea disabled class="flex-1 h-[98px] px-1 py-1 leading-[22px] border border-[#d9d9d9] rounded-[2px] bg-[#f5f5f5] resize-y placeholder:text-black/[0.22]" placeholder="Each line is a registry path, the registry in the list will be&#10;prohibited from being transferred to the personal disk, and all&#10;others will be transferred"></textarea>
          </div>
          <div class="flex h-[98px] shrink-0">
            <label class="w-[100px] pr-2 text-right overflow-hidden whitespace-nowrap leading-[32px]">Registry white list</label>
            <textarea disabled class="flex-1 h-[98px] px-1 py-1 leading-[22px] border border-[#d9d9d9] rounded-[2px] bg-[#f5f5f5] resize-y placeholder:text-black/[0.22]" placeholder="Each line is a registry path, only the registry in the list will be&#10;transferred to the personal disk, and all others will not be&#10;transferred. At the same time, the blacklist does not work."></textarea>
          </div>
          <div class="flex h-8 shrink-0">
            <label class="w-[100px] pr-2 text-right leading-8"><span class="text-[#ff4d4f]">* </span>Status</label>
            <span class="w-[73px] h-8 bg-[#0960bd] text-white flex items-center justify-center rounded-l-[2px]">Enable</span>
            <span class="w-[76px] h-8 border border-[#d9d9d9] border-l-0 flex items-center justify-center rounded-r-[2px]">Disable</span>
          </div>
        </div>
      </div>
      <div class="h-[53px] shrink-0 border-t border-[#f0f0f0] flex justify-end gap-2 pt-[10px] pr-4">
        <button class="w-[73px] h-8 border border-[#d9d9d9] rounded-[2px] text-black/85">Cancel</button>
        <button class="w-[51px] h-8 bg-[#0960bd] rounded-[2px] text-white">OK</button>
      </div>
    </div>
  </div>
</div>
</body>
</html>
